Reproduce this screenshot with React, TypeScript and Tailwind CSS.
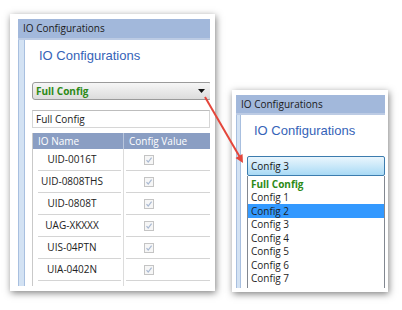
import React from 'react';

const ui = { fontFamily: '"Open Sans", "Noto Sans", sans-serif' };
const head = { fontFamily: '"Liberation Sans", Arial, sans-serif' };

const rows = ['UID-0016T', 'UID-0808THS', 'UID-0808T', 'UAG-XKXXX', 'UIS-04PTN', 'UIA-0402N'];
const options = ['Full Config', 'Config 1', 'Config 2', 'Config 3', 'Config 4', 'Config 5', 'Config 6', 'Config 7'];

function Check() {
  return (
    <span className="w-[10px] h-[10px] border border-[#c4c4c4] bg-[#f6f6f6] flex items-center justify-center">
      <svg width="8" height="8" viewBox="0 0 8 8">
        <path d="M1.5 4.2 L3.2 6 L6.6 1.6" fill="none" stroke="#a9b9d2" strokeWidth="1.2" />
      </svg>
    </span>
  );
}

function TitleBar({ h }: { h: string }) {
  return (
    <div className={`${h} bg-[#a2b8db] border-b-2 border-[#bccbe4] flex items-center pl-[5px] text-[10px] text-[#1b1b1b] shrink-0`} style={ui}>
      IO Configurations
    </div>
  );
}

function LeftWindow() {
  return (
    <div className="absolute left-[10px] top-[14px] w-[205px] h-[277px] bg-white pl-[8px] pt-[5px] pr-[5px] pb-[5px] shadow-[1px_2px_7px_rgba(0,0,0,0.5)]">
      <div className="w-full h-full flex flex-col overflow-hidden">
        <TitleBar h="h-[21px]" />
        <div className="flex flex-1 min-h-0">
          <div className="w-[7px] bg-[#d3e2f3] border-l border-r border-[#a8bfdf] shrink-0" />
          <div className="flex-1 flex flex-col pl-[7px] min-w-0">
            <div className="mt-[8px] ml-[7px] text-[13px] leading-[16px] text-[#3563b8]" style={head}>IO Configurations</div>
            <div className="mt-[18px] -mr-[2px] h-[18px] rounded-[3px] border border-[#9a9a9a] bg-gradient-to-b from-[#f6f6f6] to-[#dcdcdc] flex items-center justify-between pl-[3px] pr-[6px]">
              <span className="text-[10px] font-bold text-[#2c8a17]" style={ui}>Full Config</span>
              <svg width="7" height="4" viewBox="0 0 7 4"><path d="M0 0 H7 L3.5 4 Z" fill="#111" /></svg>
            </div>
            <div className="mt-[10px] h-[18px] border border-[#d6d6d6] border-t-[#bdbdbd] flex items-center pl-[3px] text-[10px] text-[#222]" style={ui}>Full Config</div>
            <div className="mt-[5px] flex-1 border-l border-[#c9c9c9] flex flex-col">
              <div className="h-[16px] bg-[#8a9ec3] flex text-white text-[10px] shrink-0" style={ui}>
                <div className="w-[91px] pl-[5px] flex items-center border-r border-[#b9c6dc]">IO Name</div>
                <div className="flex-1 pl-[5px] flex items-center">Config Value</div>
              </div>
              {rows.map((r) => (
                <div key={r} className="h-[22px] flex shrink-0">
                  <div className="w-[91px] flex border-r border-[#dcdcdc]">
                    <div className="ml-[5px] w-[83px] border-b border-[#d4d4d4] flex items-center text-[10px] text-[#222]" style={ui}>
                      <span className="w-[68px] text-center">{r}</span>
                    </div>
                  </div>
                  <div className="flex-1 ml-[2px] border-b border-[#d4d4d4] flex items-center pl-[18px]">
                    <Check />
                  </div>
                </div>
              ))}
              <div className="flex-1 flex">
                <div className="w-[91px] border-r border-[#dcdcdc]" />
              </div>
            </div>
          </div>
        </div>
      </div>
    </div>
  );
}

function RightWindow() {
  return (
    <div className="absolute left-[232px] top-[90px] w-[156px] h-[202px] bg-white pl-[4px] pt-[5px] pr-[3px] pb-[4px] shadow-[1px_2px_7px_rgba(0,0,0,0.5)]">
      <div className="w-full h-full flex flex-col overflow-hidden">
        <TitleBar h="h-[20px]" />
        <div className="flex flex-1 min-h-0">
          <div className="w-[5px] bg-[#d3e2f3] border-l border-r border-[#a8bfdf] shrink-0" />
          <div className="flex-1 flex flex-col pl-[6px] min-w-0">
            <div className="mt-[8px] ml-[7px] text-[13px] leading-[16px] text-[#3563b8]" style={head}>IO Configurations</div>
            <div className="mt-[17px] h-[20px] rounded-[2px] border border-[#3c7cae] bg-gradient-to-b from-[#eaf6fd] to-[#a9daf5] flex items-center pl-[3px] text-[10px] text-[#1a1a1a] shrink-0" style={ui}>
              Config 3
            </div>
            <div className="flex-1 border-l border-r border-[#828790] bg-white pt-[1px]">
              {options.map((o, i) => (
                <div
                  key={o}
                  className={`h-[13.5px] flex items-center pl-[3px] text-[10px] leading-none ${i === 0 ? 'font-bold text-[#2c8a17]' : 'text-[#1e1e1e]'} ${i === 2 ? 'bg-[#3399ff]' : ''}`}
                  style={ui}
                >
                  {o}
                </div>
              ))}
            </div>
          </div>
        </div>
      </div>
    </div>
  );
}

export default function App() {
  return (
    <div className="relative w-[402px] h-[310px] bg-white overflow-hidden">
      <LeftWindow />
      <RightWindow />
      <svg className="absolute left-0 top-0" width="402" height="310" viewBox="0 0 402 310">
        <line x1="205" y1="97" x2="239.5" y2="156.5" stroke="#e4463b" strokeWidth="2" />
        <polygon points="243,163 235.5,158.1 242.5,154.1" fill="#e4463b" />
      </svg>
    </div>
  );
}
